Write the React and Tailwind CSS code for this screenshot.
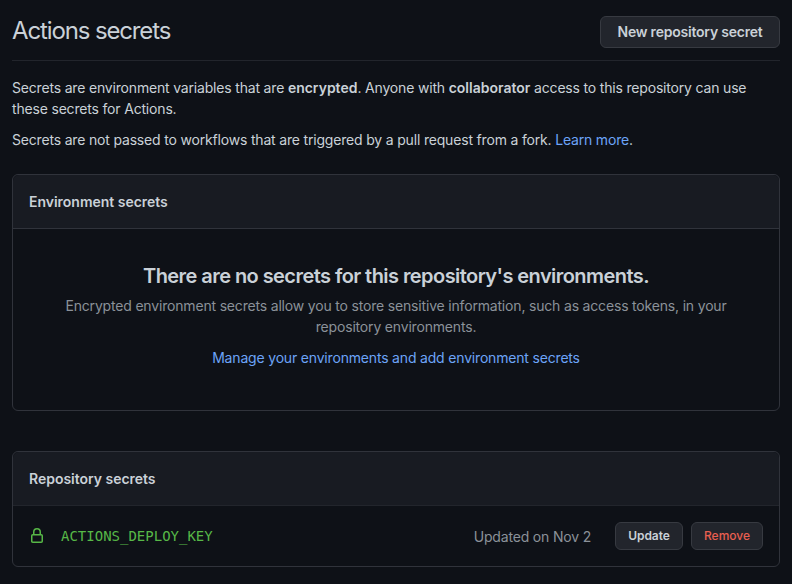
const Panel = ({ title, className, headerBorder, children }) => (
  <section className={`flex flex-col rounded-md border border-[#30333b] ${className}`}>
    <h3 className={`flex h-[54px] shrink-0 items-center rounded-t-md border-b bg-[#181b22] px-4 text-[14px] font-semibold tracking-[-0.02px] ${headerBorder}`}>
      {title}
    </h3>
    {children}
  </section>
);

const LockIcon = () => (
  <svg width="16" height="16" viewBox="0 0 16 16" fill="#57b847" aria-hidden="true">
    <path fillRule="evenodd" d="M4 4v2h-.25A1.75 1.75 0 002 7.75v5.5c0 .966.784 1.75 1.75 1.75h8.5A1.75 1.75 0 0014 13.25v-5.5A1.75 1.75 0 0012.25 6H12V4a4 4 0 10-8 0zm6.5 2V4a2.5 2.5 0 10-5 0v2h5zM12 7.5h.25a.25.25 0 01.25.25v5.5a.25.25 0 01-.25.25h-8.5a.25.25 0 01-.25-.25v-5.5a.25.25 0 01.25-.25H12z" />
  </svg>
);

export default function App() {
  return (
    <main className="flex h-[584px] w-[792px] flex-col overflow-hidden bg-[#0e1117] px-3 font-['Inter',sans-serif] text-[14px] leading-[21px] tracking-[-0.18px] text-[#cad1d8]">
      <header className="flex h-[61px] shrink-0 items-center justify-between border-b border-[#22252c]">
        <h2 className="pt-[2px] text-[24px] leading-9 tracking-[-1.13px]">Actions secrets</h2>
        <button className="mt-1 h-8 w-[180px] rounded-md border border-[#373a41] bg-[#22252c] pb-[2px] text-[14px] font-semibold tracking-[-0.22px]">New repository secret</button>
      </header>
      <p className="mt-4 whitespace-nowrap">
        Secrets are environment variables that are <b className="font-semibold tracking-normal">encrypted</b>. Anyone with <b className="font-semibold tracking-normal">collaborator</b> access to this repository can use<br />these secrets for Actions.
      </p>
      <p className="mt-[10px] whitespace-nowrap">
        Secrets are not passed to workflows that are triggered by a pull request from a fork. <a className="text-[#6ca4f8]">Learn more</a>.
      </p>
      <Panel title="Environment secrets" className="mt-6 h-[237px] shrink-0" headerBorder="border-[#30333b]">
        <div className="flex flex-col items-center pt-8 text-center whitespace-nowrap">
          <h3 className="text-[20px] leading-[30px] font-semibold tracking-[-0.56px]">There are no secrets for this repository's environments.</h3>
          <p className="mt-1 text-[#8b9199]">Encrypted environment secrets allow you to store sensitive information, such as access tokens, in your<br />repository environments.</p>
          <a className="mt-[10px] text-[#6ca4f8]">Manage your environments and add environment secrets</a>
        </div>
      </Panel>
      <Panel title="Repository secrets" className="mt-10 h-[116px] shrink-0" headerBorder="border-[#22252c]">
        <div className="flex flex-1 items-center px-4">
          <LockIcon />
          <code className="ml-4 font-['DejaVu_Sans_Mono',monospace] text-[14px] tracking-normal text-[#57b847]">ACTIONS_DEPLOY_KEY</code>
          <span className="ml-auto text-[#8b9199]">Updated on Nov 2</span>
          <button className="ml-6 h-7 w-[68px] rounded-md border border-[#373a41] bg-[#22252c] pb-[2px] text-[12px] font-semibold tracking-[-0.1px]">Update</button>
          <button className="ml-2 h-7 w-[72px] rounded-md border border-[#373a41] bg-[#22252c] pb-[2px] text-[12px] font-medium tracking-normal text-[#e85f50]">Remove</button>
        </div>
      </Panel>
    </main>
  );
}
